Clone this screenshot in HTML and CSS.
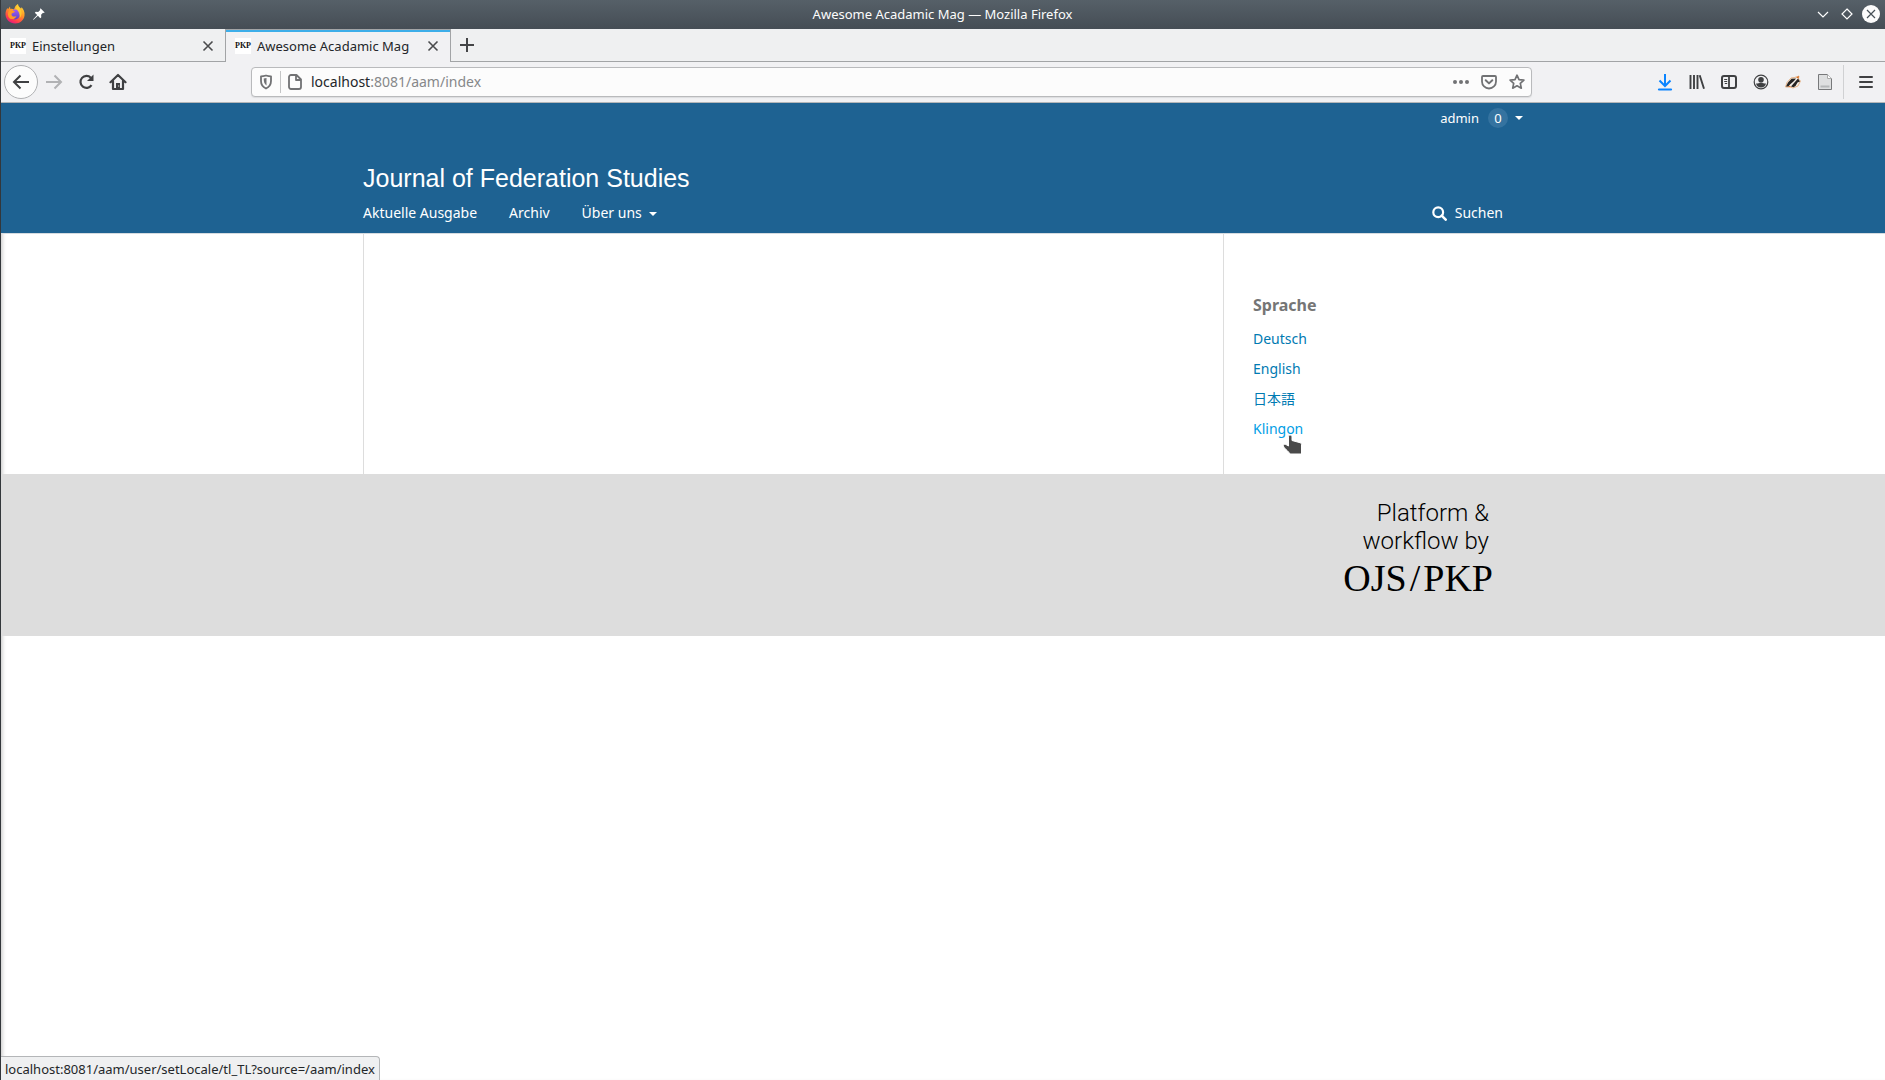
FILE: index.html
```html
<!DOCTYPE html>
<html lang="de">
<head>
<meta charset="utf-8">
<title>Awesome Acadamic Mag</title>
<link rel="stylesheet" href="styles.css">
</head>
<body>
<div class="window">
  <div class="titlebar">
    <div class="titlebar-side">
      <svg width="20" height="20" viewBox="0 0 20 20">
        <defs>
          <linearGradient id="fox" x1="0.8" y1="0" x2="0.3" y2="1"><stop offset="0" stop-color="#ffe33a"/><stop offset="0.45" stop-color="#ff9426"/><stop offset="0.8" stop-color="#ff3f4b"/><stop offset="1" stop-color="#e11586"/></linearGradient>
          <linearGradient id="globe" x1="0" y1="0" x2="0" y2="1"><stop offset="0" stop-color="#a05cf5"/><stop offset="1" stop-color="#5c43c9"/></linearGradient>
        </defs>
        <path fill="url(#fox)" d="M10 3C10.500 1.500 12 0.500 13 0c0 2 1.500 3 3 4.500 0.500-0.300 0.500-1 0.400-1.500C18.500 5 20 8 19.500 11.500 19 16 15 19.500 10.200 19.500 5 19.500 0.700 15.500 0.500 10.500 0.400 8 1.200 5.500 2.500 4l0.500 1.200L5 2.500 5.300 5C6.500 4.500 8 5 9 5.500z"/>
        <circle cx="10" cy="10.500" r="5" fill="url(#globe)"/>
        <path fill="#ff9a26" d="M4 6.500c2-1.500 4-0.500 6 1.300-1 1.200-3 1-3.500 2.200-0.300 2 2 3.500 5 2-1 3-4.500 4-7 2.200C2.500 12 2.500 9 4 6.500z"/>
        <path fill="#ffd42f" d="M13 1.500c0 2 3.500 3.500 3.600 7.500 0 2-0.600 3.600-1.800 5 0-4-1-7-4-9.500z" opacity=".75"/>
      </svg>
      <svg width="12" height="12" viewBox="0 0 12 12" fill="#fff"><path d="M7.500 0.300l4.200 4.200-1 0.500-0.700-0.200-1.900 2 0.200 2.400-1 1L4.900 7.700 0.600 11.800 0 11.500 4.200 7 1.800 4.700l1-1 2.400 0.200 2-1.900L7 1.300z"/></svg>
    </div>
    <div class="window-title">Awesome Acadamic Mag — Mozilla Firefox</div>
    <div class="titlebar-side titlebar-end">
      <button class="win-btn" aria-label="Minimieren"><svg width="18" height="18" viewBox="0 0 18 18"><path d="M4 7l5 5 5-5" fill="none" stroke="#fff" stroke-width="1.200"/></svg></button>
      <button class="win-btn" aria-label="Maximieren"><svg width="18" height="18" viewBox="0 0 18 18"><path d="M9 4l5 5-5 5-5-5z" fill="none" stroke="#fff" stroke-width="1.200"/></svg></button>
      <button class="win-btn" aria-label="Schließen"><svg width="18" height="18" viewBox="0 0 18 18"><circle cx="9" cy="9" r="9" fill="#fcfcfc"/><path d="M5 5l8 8M13 5l-8 8" stroke="#475057" stroke-width="1.200"/></svg></button>
    </div>
  </div>

  <div class="tabs">
    <div class="tab">
      <span class="favicon">PKP</span><span class="tab-label">Einstellungen</span>
      <button class="tab-close" aria-label="Tab schließen"><svg width="12" height="12" viewBox="0 0 12 12"><path d="M1.500 1.500l9 9M10.500 1.500l-9 9" stroke="#4a4b4d" stroke-width="1.600"/></svg></button>
    </div>
    <div class="tab tab-active">
      <span class="favicon">PKP</span><span class="tab-label">Awesome Acadamic Mag</span>
      <button class="tab-close" aria-label="Tab schließen"><svg width="12" height="12" viewBox="0 0 12 12"><path d="M1.500 1.500l9 9M10.500 1.500l-9 9" stroke="#4a4b4d" stroke-width="1.600"/></svg></button>
    </div>
    <div class="tabs-rest">
      <button class="tab-new" aria-label="Neuer Tab"><svg width="16" height="16" viewBox="0 0 16 16"><path d="M8 1v14M1 8h14" stroke="#444547" stroke-width="2"/></svg></button>
    </div>
  </div>

  <div class="toolbar">
    <button class="back" aria-label="Zurück"><svg width="18" height="18" viewBox="0 0 18 18"><path d="M17 9H2M8.500 2.500L2 9l6.500 6.500" fill="none" stroke="#3f4042" stroke-width="2"/></svg></button>
    <button class="tool" aria-label="Vor"><svg width="18" height="18" viewBox="0 0 18 18"><path d="M1 9h15M9.500 2.500L16 9l-6.500 6.500" fill="none" stroke="#b1b2b4" stroke-width="2"/></svg></button>
    <button class="tool" aria-label="Neu laden"><svg width="18" height="18" viewBox="0 0 18 18"><path d="M14.500 12.200A6 6 0 1 1 13.800 4.700" fill="none" stroke="#3f4042" stroke-width="2.200"/><path d="M16.500 1.500v6.500H10z" fill="#3f4042"/></svg></button>
    <button class="tool" aria-label="Startseite"><svg width="18" height="18" viewBox="0 0 18 18"><path d="M1.500 9.200L9 2l7.500 7.200M4 8v8h10V8" fill="none" stroke="#3f4042" stroke-width="2.200" stroke-linejoin="round" stroke-linecap="round"/><path d="M7 10h4v6.500H7z" fill="#3f4042"/><path d="M9.200 12.500h1v1h-1z" fill="#fff"/></svg></button>
    <div class="spacer"></div>
    <div class="urlbar">
      <div class="shield"><svg width="14" height="16" viewBox="0 0 14 16"><path d="M7 1.500c1.800 0.500 3.500 0.800 5 0.800V7c0 3.500-1.800 6-5 7.500C3.800 13 2 10.500 2 7V2.300c1.500 0 3.200-0.300 5-0.800z" fill="none" stroke="#717274" stroke-width="1.800" stroke-linejoin="round"/><path d="M7.500 4v7.500C5.500 10 4.700 8.500 4.700 4.500z" fill="#717274"/></svg></div>
      <svg class="page-icon" width="14" height="16" viewBox="0 0 14 16"><path d="M3 1h5.500L13 5.500V13a2 2 0 0 1-2 2H3a2 2 0 0 1-2-2V3a2 2 0 0 1 2-2zM8 1v5h5" fill="none" stroke="#717274" stroke-width="1.800" stroke-linejoin="round"/></svg>
      <div class="url">localhost<span>:8081/aam/index</span></div>
      <div class="url-actions">
        <svg width="16" height="16" viewBox="0 0 16 16" fill="#717274"><circle cx="2" cy="8" r="2"/><circle cx="8" cy="8" r="2"/><circle cx="14" cy="8" r="2"/></svg>
        <svg width="16" height="16" viewBox="0 0 16 16"><path d="M2 2h12a1 1 0 0 1 1 1v4.500a7 7 0 0 1-14 0V3a1 1 0 0 1 1-1z" fill="none" stroke="#717274" stroke-width="1.800"/><path d="M4.700 6.200L8 9.400l3.300-3.200" fill="none" stroke="#717274" stroke-width="2" stroke-linecap="round" stroke-linejoin="round"/></svg>
        <svg width="16" height="16" viewBox="0 0 16 16"><path d="M8 1.200l2 4.400 4.900 0.500-3.600 3.300 1 4.800L8 11.800l-4.300 2.400 1-4.800L1.100 6.100 6 5.600z" fill="none" stroke="#717274" stroke-width="1.700" stroke-linejoin="round"/></svg>
      </div>
    </div>
    <div class="spacer"></div>
    <button class="tool" aria-label="Downloads"><svg width="16" height="18" viewBox="0 0 16 18"><path d="M8 1v11.500M2.500 7.500L8 13l5.500-5.500" fill="none" stroke="#0a84ff" stroke-width="2"/><path d="M2 16.500h12" stroke="#0a84ff" stroke-width="2.200" stroke-linecap="round"/></svg></button>
    <button class="tool" aria-label="Bibliothek"><svg width="16" height="16" viewBox="0 0 16 16" stroke="#3f4042" stroke-width="1.900"><path d="M1.500 1v14M5 1v14M8.500 1v14M10.700 1.300l4.300 13.500"/></svg></button>
    <button class="tool" aria-label="Seitenleiste"><svg width="16" height="16" viewBox="0 0 16 16" fill="none" stroke="#3f4042"><rect x="1" y="2" width="14" height="12" rx="2" stroke-width="2"/><path d="M8 2v12" stroke-width="1.800"/><path d="M3.200 5.500h3M3.200 7.500h3M3.800 9.500h2.400" stroke-width="1"/></svg></button>
    <button class="tool" aria-label="Konto"><svg width="16" height="16" viewBox="0 0 16 16"><circle cx="8" cy="8" r="6.800" fill="none" stroke="#3f4042" stroke-width="1.200"/><circle cx="8" cy="5.800" r="2.800" fill="#3f4042"/><path d="M3 9.500c2 0 3-0.800 5-0.800s3 0.800 5 0.800c-0.500 2.500-2.500 4-5 4s-4.500-1.500-5-4z" fill="#3f4042"/></svg></button>
    <button class="tool" aria-label="Privacy Badger"><svg width="16" height="16" viewBox="0 0 16 16"><path d="M0.500 13L2 8.500 6 4l3.500-0.500L14 2l-0.500 3L15.500 7 13 12l-5 2-3-1z" fill="#f3eee8" stroke="#dd8c43" stroke-width=".6"/><path d="M1 12.500L3 8.500 6.500 4.800 11 4.500 9 7 5 10.500 3.500 12.500zM6 12.500L9 9l4-4.500 2 3-2.500 1-2 3.500-2 1.200z" fill="#252322"/><path d="M11 3.500L14 2l-0.500 2.500zM2 13l3-1 1 1z" fill="#d76e24"/></svg></button>
    <button class="tool" aria-label="Dokument"><svg width="16" height="18" viewBox="0 0 16 18"><path d="M1.500 1.500h9l4 4v11h-13z" fill="#dedfe0" stroke="#77787a"/><path d="M10.500 1.500v4h4" fill="#fff" stroke="#aaa"/><path d="M3.500 12.500h9v2h-9z" fill="#b5b7b9"/></svg></button>
    <div class="tool-divider"></div>
    <button class="tool" aria-label="Menü"><svg width="14" height="14" viewBox="0 0 14 14"><path d="M1 2h12M1 7h12M1 12h12" stroke="#3f4042" stroke-width="2" stroke-linecap="round"/></svg></button>
  </div>

  <div class="site">
    <header class="site-header">
      <div class="container">
        <nav class="user-nav"><a href="#">admin <span class="count">0</span><i class="caret"></i></a></nav>
        <h1 class="site-name"><a href="#">Journal of Federation Studies</a></h1>
        <nav class="main-nav">
          <a href="#">Aktuelle Ausgabe</a>
          <a href="#">Archiv</a>
          <a href="#">Über uns<i class="caret"></i></a>
          <a href="#" class="search"><svg width="15" height="15" viewBox="0 0 15 15"><circle cx="6.200" cy="6.200" r="4.900" fill="none" stroke="#fff" stroke-width="2.200"/><path d="M9.700 9.700l4 4" stroke="#fff" stroke-width="2.500" stroke-linecap="round"/></svg>Suchen</a>
        </nav>
      </div>
    </header>
    <div class="container content">
      <main class="main"></main>
      <aside class="sidebar">
        <h2>Sprache</h2>
        <ul>
          <li><a href="#">Deutsch</a></li>
          <li><a href="#">English</a></li>
          <li><a href="#" lang="ja">日本語</a></li>
          <li><a href="#" class="hovered">Klingon<svg class="pointer" width="22" height="24" viewBox="0 0 22 24"><path d="M8 2c1.300 0 2 0.800 2 2v3.500l8 2.200c1 0.300 1.500 1 1.500 2V21H8c-1-2-3.500-4-6-6.500L1 12l2-1 3.500 2V4c0-1.200 0.500-2 1.500-2z" fill="#4a4a4a" stroke="#fff" stroke-width="1"/></svg></a></li>
        </ul>
      </aside>
    </div>
    <footer class="site-footer">
      <div class="container">
        <a href="#" class="brand">
          <span>Platform &amp;</span>
          <span>workflow by</span>
          <span class="brand-name"><b>OJS</b><b>/</b><b>PKP</b></span>
        </a>
      </div>
    </footer>
  </div>
  <div class="status">localhost:8081/aam/user/setLocale/tl_TL?source=/aam/index</div>
</div>
</body>
</html>
```
FILE: styles.css
```css
* { box-sizing: border-box; }

body {
  margin: 0;
  background: #fff;
  font: 14px/20px "Noto Sans", "Noto Sans CJK JP", sans-serif;
  color: #232629;
}

a { color: inherit; text-decoration: none; }

button {
  display: flex;
  align-items: center;
  justify-content: center;
  padding: 0;
  border: 0;
  background: none;
}

svg { display: block; flex: none; }

.window {
  position: relative;
  min-height: 100vh;
  border-left: 1px solid #33373b;
  box-shadow: inset 4px 0 4px -3px rgba(0, 0, 0, 0.25);
}

/* Window title */
.titlebar {
  display: flex;
  align-items: center;
  height: 29px;
  padding: 0 5px 1px 4px;
  background: linear-gradient(#566068, #454d55);
  color: #fcfcfc;
  font-size: 13px;
}

.titlebar-side { flex: 1; display: flex; align-items: center; gap: 8px; }
.titlebar-end { justify-content: flex-end; gap: 6px; }
.win-btn { width: 18px; height: 18px; }

/* Tabs */
.tabs { display: flex; height: 33px; background: #eff0f1; font-size: 13px; }

.tab {
  display: flex;
  align-items: center;
  width: 224px;
  padding: 2px 11px 0 9px;
  border-bottom: 1px solid #a2a4a6;
}

.tab-active {
  width: 226px;
  padding-top: 1px;
  border: 1px solid #a2a4a6;
  border-width: 0 1px;
  background: #f1f1f3;
  box-shadow: inset 0 1px #a2a4a6, inset 0 3px #3daee9;
}

.favicon {
  width: 16px;
  height: 16px;
  margin-right: 6px;
  background: #fff;
  color: #111;
  font: bold 8px/15px "Liberation Serif", serif;
  text-align: center;
}

.tab-label { flex: 1; white-space: nowrap; }
.tab-close { width: 12px; height: 16px; }
.tabs-rest { flex: 1; display: flex; align-items: center; padding-left: 8px; border-bottom: 1px solid #a2a4a6; }
.tab-new { width: 16px; height: 16px; }

/* Toolbar */
.toolbar {
  display: flex;
  align-items: center;
  height: 41px;
  padding: 0 3px;
  border-bottom: 1px solid #b4b6b8;
  background: #f1f1f3;
}

.back {
  width: 34px;
  height: 34px;
  border: 1px solid #b0b1b3;
  border-radius: 50%;
  background: #fcfcfc;
}

.tool { width: 32px; height: 32px; }
.spacer { flex: 0 1 117px; }

.urlbar {
  flex: 1;
  display: flex;
  align-items: center;
  height: 30px;
  border: 1px solid #b9babc;
  border-radius: 4px;
  background: #fcfcfc;
  box-shadow: 0 1px 1px #dcdddf;
}

.shield { padding: 3px 7px 3px 7px; border-right: 1px solid #c4c5c6; }
.page-icon { margin-left: 7px; }
.url { flex: 1; margin-left: 9px; }
.url span { color: #86888a; }
.url-actions { display: flex; gap: 12px; padding-right: 6px; }
.tool-divider { width: 1px; height: 34px; margin: 0 6px 0 2px; background: #d0d1d3; }

/* Journal site */
.container { max-width: 1160px; margin: 0 auto; }
.site-header { border-bottom: 1px solid #d5dbe0; background: #1e6292; color: #fff; }
.user-nav { display: flex; justify-content: flex-end; height: 60px; padding-top: 5px; font-size: 13px; }
.user-nav a { display: flex; align-items: center; height: 20px; }

.count {
  width: 20px;
  height: 20px;
  margin-left: 9px;
  border-radius: 50%;
  background: #3573a0;
  text-align: center;
}

.caret {
  display: inline-block;
  margin-left: 7px;
  border: 4px solid transparent;
  border-top-color: currentColor;
  border-bottom: 0;
  vertical-align: middle;
}

.site-name { margin: 0; font: 25px/30px "Liberation Sans", sans-serif; }
.main-nav { display: flex; gap: 32px; height: 40px; padding-top: 10px; }
.search { display: flex; align-items: center; gap: 8px; height: 20px; margin-left: auto; padding-right: 20px; }

.content { display: flex; }
.main { flex: 1; border: 1px solid #ddd; border-width: 0 0 0 1px; }
.sidebar { width: 300px; padding: 61px 30px 30px 29px; border-left: 1px solid #ddd; }
.sidebar h2 { margin: 0 0 9px; font-size: 16px; line-height: 20px; color: #757575; }
.sidebar ul { margin: 0; padding: 0; list-style: none; color: #007ab2; }
.sidebar li { padding: 5px 0; }
.hovered { position: relative; color: #009de5; }
.pointer { position: absolute; top: 14px; left: 29px; }

.site-footer { padding: 25px 0 35px; background: #ddd; }
.site-footer .container { display: flex; justify-content: flex-end; padding-right: 30px; }

.brand {
  display: flex;
  flex-direction: column;
  align-items: flex-end;
  color: #000;
  font: 300 24px/28px Roboto, sans-serif;
}

.brand > span { padding-right: 4px; }
.brand .brand-name { display: flex; gap: 3px; padding: 0; font: 38px/46px "Liberation Serif", serif; }
.brand b { font-weight: 400; }

/* Link target shown over the page */
.status {
  position: absolute;
  left: 0;
  bottom: 0;
  height: 24px;
  padding: 2px 4px;
  border: 1px solid #b4b6b8;
  border-width: 1px 1px 0 0;
  border-top-right-radius: 4px;
  background: #eff0f1;
  font-size: 13px;
}
```
